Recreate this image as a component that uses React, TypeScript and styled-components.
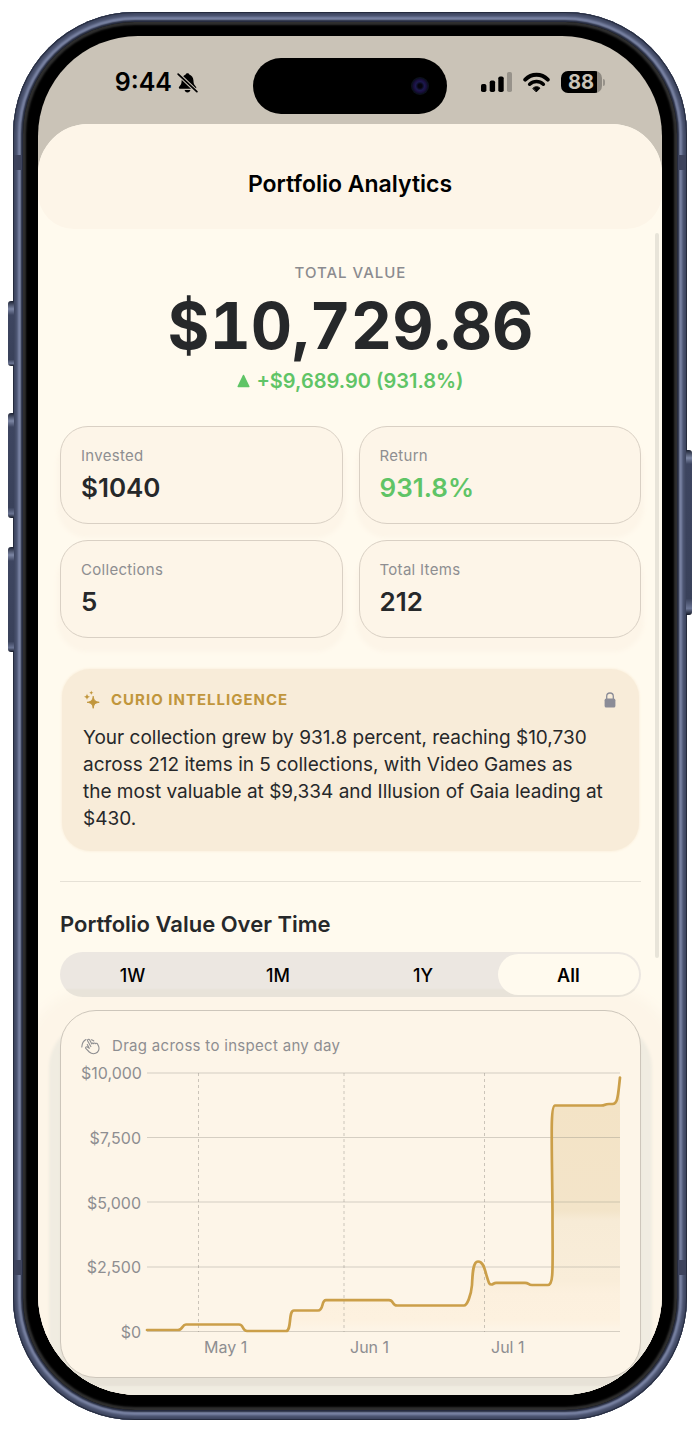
import React, { useState } from "react";
import styled, { createGlobalStyle, css } from "styled-components";

const Global = createGlobalStyle`
  *, *::before, *::after { box-sizing: border-box; }
  body {
    margin: 0;
    background: #ffffff;
    color: #26282a;
    font-family: Inter, "Liberation Sans", sans-serif;
  }
  h1, h2, p, dl, dd, dt, figure { margin: 0; }
`;

/* ---------- device ---------- */

const Page = styled.div`
  padding: 12px 13px;
`;

const Frame = styled.div`
  position: relative;
  padding: 10px;
  border-radius: 122px;
  background: #4a5371;
  box-shadow:
    inset 0 0 1px 1px #23293a,
    inset 0 0 3px 5px #434b66,
    inset 0 0 2px 8px #8690b2,
    inset 0 0 1px 10px #1d2233;
`;

const Bezel = styled.div`
  padding: 14px 15px 15px;
  border-radius: 112px;
  background: #000000;
  box-shadow: inset 0 0 2px 3px #2f2f2f;
`;

const Screen = styled.div`
  position: relative;
  overflow: hidden;
  border-radius: 100px;
  background: #cac3b7;
`;

const SideKey = styled.span<{ $side: "left" | "right"; $top: number; $height: number }>`
  position: absolute;
  ${(p) => p.$side}: -5px;
  top: ${(p) => p.$top}px;
  width: 6px;
  height: ${(p) => p.$height}px;
  border-radius: ${(p) => (p.$side === "left" ? "3px 0 0 3px" : "0 3px 3px 0")};
  background: linear-gradient(to bottom, #1c2233, #7c86a4 8px, #3d4560 14px, #39415a 90%, #6b7594 96%, #151a28);
`;

const Antenna = styled.span<{ $side: "left" | "right"; $end: "top" | "bottom" }>`
  position: absolute;
  ${(p) => p.$side}: 1px;
  ${(p) => p.$end}: ${(p) => (p.$end === "top" ? 143 : 145)}px;
  width: 8px;
  height: 15px;
  background: #3d435c;
`;

/* ---------- status bar ---------- */

const StatusBar = styled.header`
  display: grid;
  grid-template-columns: 1fr 194px 1fr;
  align-items: start;
  height: 88px;
  padding-top: 22px;
  color: #000000;
`;

const Clock = styled.div`
  display: flex;
  align-items: center;
  justify-content: flex-end;
  gap: 5px;
  height: 48px;
  padding-right: 55px;
  font-size: 25px;
  font-weight: 600;
`;

const Island = styled.div`
  display: flex;
  align-items: center;
  justify-content: flex-end;
  height: 56px;
  padding-right: 18px;
  border-radius: 28px;
  background: #000000;
`;

const Lens = styled.span`
  width: 18px;
  height: 18px;
  border-radius: 50%;
  background: radial-gradient(circle, #05040c 15%, #1b1a4e 35%, #1a0d3c 50%, #0a0f20 62%, #0d1219 70%);
`;

const Indicators = styled.div`
  display: flex;
  align-items: center;
  gap: 11px;
  height: 48px;
  padding-left: 34px;
`;

const Battery = styled.div`
  display: flex;
  align-items: center;
  gap: 1px;
`;

const BatteryCell = styled.div`
  width: 41px;
  height: 22px;
  border-radius: 7px;
  background: linear-gradient(to right, #000000 36px, #8f8a82 36px);
  color: #cac3b7;
  padding-right: 1px;
  font-size: 20px;
  font-weight: 700;
  line-height: 22px;
  text-align: center;
`;

const BatteryTip = styled.span`
  width: 2px;
  height: 7px;
  border-radius: 0 2px 2px 0;
  background: #97928a;
`;

/* ---------- sheet ---------- */

const Sheet = styled.main`
  border-radius: 50px 50px 0 0;
  background: #fffaee;
`;

const SheetHeader = styled.div`
  display: flex;
  align-items: center;
  justify-content: center;
  height: 105px;
  padding-top: 15px;
  border-radius: 50px 50px 36px 36px;
  background: #fdf5e8;
`;

const SheetTitle = styled.h1`
  color: #000000;
  font-size: 23px;
  font-weight: 600;
  line-height: 30px;
`;

const Content = styled.div`
  padding: 34px 21px 17px 22px;
`;

const ScrollThumb = styled.span`
  position: absolute;
  top: 197px;
  right: 3px;
  width: 4px;
  height: 725px;
  border-radius: 2px;
  background: #e8e4d9;
`;

/* ---------- total ---------- */

const Total = styled.section`
  display: flex;
  flex-direction: column;
  align-items: center;
`;

const Eyebrow = styled.h2`
  color: #8b8b8f;
  font-size: 15px;
  font-weight: 500;
  line-height: 20px;
  letter-spacing: 1px;
`;

const Amount = styled.p`
  margin-top: 7px;
  font-size: 64px;
  font-weight: 700;
  font-variant-numeric: tabular-nums;
  line-height: 72px;
`;

const Change = styled.p`
  display: flex;
  align-items: center;
  gap: 6px;
  margin-top: 7px;
  color: #5fc466;
  font-size: 20px;
  font-weight: 600;
  line-height: 24px;
`;

/* ---------- stats ---------- */

const Stats = styled.dl`
  display: grid;
  grid-template-columns: 1fr 1fr;
  gap: 16px;
  margin-top: 33px;
`;

const outlined = css`
  border: 1px solid #d9d0c4;
  background: #fdf5e8;
`;

const Stat = styled.div`
  ${outlined}
  height: 98px;
  padding: 19px 20px;
  border-radius: 28px;
  box-shadow: 0 11px 4px 3px #fdf5e8;
`;

const StatLabel = styled.dt`
  color: #8e8e91;
  font-size: 15px;
  line-height: 20px;
  letter-spacing: 0.02em;
`;

const StatValue = styled.dd<{ $positive?: boolean }>`
  margin-top: 6px;
  color: ${(p) => (p.$positive ? "#5fc466" : "#26282a")};
  font-size: 26px;
  font-weight: 600;
  line-height: 32px;
`;

/* ---------- insight ---------- */

const Insight = styled.section`
  margin: 31px 2px 0;
  padding: 20px 23px 19px 21px;
  border-radius: 28px;
  background: #f8ecd9;
  box-shadow: 0 0 2px 1px #fcf2e1;
`;

const InsightHead = styled.div`
  display: flex;
  align-items: center;
  height: 22px;
`;

const InsightTitle = styled.h2`
  flex: 1;
  margin-left: 10px;
  color: #c1963c;
  font-size: 15px;
  font-weight: 700;
  line-height: 22px;
  letter-spacing: 1px;
`;

const InsightText = styled.p`
  margin-top: 13px;
  font-size: 19px;
  line-height: 27px;
`;

const Divider = styled.hr`
  height: 1px;
  margin: 30px 0 0;
  border: 0;
  background: #e6e1d6;
`;

/* ---------- history ---------- */

const SectionTitle = styled.h2`
  margin-top: 27px;
  font-size: 22px;
  font-weight: 600;
  line-height: 30px;
`;

const Segments = styled.div`
  position: relative;
  z-index: 1;
  display: grid;
  grid-template-columns: repeat(4, 1fr);
  height: 45px;
  margin-top: 13px;
  padding: 2px 0;
  border-radius: 23px;
  background: linear-gradient(to bottom, #ece7e1 36px, #e8e3d9 38px);
`;

const Segment = styled.button<{ $active: boolean }>`
  margin: 0 2px;
  padding: 1px 0 0;
  border: 0;
  border-radius: 21px;
  background: ${(p) => (p.$active ? "#fffaee" : "transparent")};
  color: #000000;
  font-family: inherit;
  font-size: 18px;
  font-weight: ${(p) => (p.$active ? 600 : 500)};
  cursor: pointer;
`;

const ChartCard = styled.figure`
  ${outlined}
  height: 368px;
  margin-top: 13px;
  padding: 24px 20px 20px;
  border-color: #cdc6bb;
  border-radius: 36px;
  box-shadow:
    0 8px 2px 0 #e7e2d7,
    0 22px 3px 11px #f0ece1,
    0 14px 12px 36px #fdf5e8;
`;

const Hint = styled.figcaption`
  display: flex;
  align-items: center;
  gap: 12px;
  color: #8e8e91;
  font-size: 15px;
  line-height: 22px;
  letter-spacing: 0.02em;
`;

const Plot = styled.div`
  display: grid;
  grid-template-columns: 60px 1fr;
  column-gap: 6px;
  margin-top: 6px;
`;

const axisText = css`
  color: #8e8e91;
  font-size: 16px;
  line-height: 20px;
`;

const YAxis = styled.div`
  ${axisText}
  display: flex;
  flex-direction: column;
  justify-content: space-between;
  height: 279px;
  text-align: right;
`;

const XAxis = styled.div`
  ${axisText}
  grid-column: 2;
  display: grid;
  grid-template-columns: 57fr 146fr 141fr 129fr;
  margin-top: -5px;
`;

const XTick = styled.span<{ $first?: boolean }>`
  ${(p) => p.$first && "grid-column-start: 2;"}
`;

const Graph = styled.svg`
  display: block;
  width: 100%;
  height: 259px;
  margin-top: 10px;
  overflow: visible;
`;

/* ---------- icons ---------- */

const BellOff = () => (
  <svg width="21" height="23" viewBox="0 0 22 24" aria-hidden="true">
    <path
      d="M11 2.200c.9 0 1.600.5 1.900 1.300 2.600.9 4.200 3.200 4.300 6.200.1 3.300.7 4.800 2.200 6.200.6.6.8 1 .8 1.500 0 .7-.6 1.200-1.500 1.200H3.400c-.9 0-1.500-.5-1.500-1.200 0-.5.2-.9.8-1.500 1.500-1.400 2.100-2.900 2.200-6.200C5 6.700 6.500 4.400 9.100 3.500c.3-.8 1-1.300 1.900-1.300zM8 19.900h6c-.2 1.500-1.400 2.500-3 2.500s-2.800-1-3-2.500z"
      fill="#000"
    />
    <path d="M.8 2.800 21 21.800" stroke="#cac3b7" strokeWidth="4" />
    <path d="M1.200 3.200 20.800 21.600" stroke="#000" strokeWidth="1.800" strokeLinecap="round" />
  </svg>
);

const Signal = () => (
  <svg width="31" height="20" viewBox="0 0 31 20" aria-hidden="true">
    <rect x="0" y="12" width="5.400" height="8" rx="1.800" />
    <rect x="8.700" y="8.500" width="5.400" height="11.500" rx="1.800" />
    <rect x="17.300" y="4.500" width="5.400" height="15.500" rx="1.800" />
    <rect x="26" y="0" width="5" height="20" rx="1.800" fill="#97928a" />
  </svg>
);

const Wifi = () => (
  <svg width="27" height="21" viewBox="0 0 28 21" fill="none" stroke="#000" strokeLinecap="round" aria-hidden="true">
    <path d="M2.300 7.600C9 .8 19 .8 25.700 7.600" strokeWidth="4" />
    <path d="M6.900 12.300c4.200-3.900 10-3.900 14.200 0" strokeWidth="3.600" />
    <path d="M10.400 16.400c2-2.100 5.200-2.100 7.200 0L14 20z" fill="#000" strokeWidth="1" strokeLinejoin="round" />
  </svg>
);

const Sparkles = () => (
  <svg width="18" height="20" viewBox="0 0 18 20" fill="#c1963c" aria-hidden="true">
    <path d="M10.200 6.300c.5 3.900 1.900 5.400 6 6-4.100.6-5.500 2.100-6 6-.5-3.900-1.900-5.400-6-6 4.100-.6 5.500-2.100 6-6z" stroke="#c1963c" strokeLinejoin="round" />
    <path d="M4 3.500c.4 2.200 1.100 3 3.200 3.300C5.100 7.200 4.400 8 4 10.100 3.600 8 2.900 7.200.8 6.800 2.900 6.500 3.600 5.700 4 3.500z" />
    <path d="M8.300.5c.3 1.500.7 2 2.200 2.300-1.500.3-1.900.7-2.200 2.200-.3-1.500-.7-1.900-2.200-2.200C7.600 2.500 8 2 8.300.5z" />
  </svg>
);

const Lock = () => (
  <svg width="12" height="16" viewBox="0 0 12 16" role="img" aria-label="Private">
    <path d="M2.700 7V4.300a3.300 3.300 0 0 1 6.600 0V7" fill="none" stroke="#8b8c97" strokeWidth="1.300" />
    <rect x="0.600" y="6.600" width="10.800" height="8.900" rx="1.600" fill="#8b8c97" />
  </svg>
);

const DragHand = () => (
  <svg width="19" height="18" viewBox="0 0 19 18" fill="none" stroke="#8e8e91" strokeWidth="1.100" strokeLinecap="round" strokeLinejoin="round" aria-hidden="true">
    <path d="M.8 10C1 6.400 2.700 3.700 5 2.500M10.400 2.700c1 .3 1.700.7 2.400 1.300" />
    <path d="M9.800 9.600 6.700 4C6 2.600 7.900 1.600 8.700 3l2.100 3.900c.2-.9 1.400-1.100 1.900-.2.3-.8 1.500-.9 2 0 .4-.7 1.400-.6 1.800.2l1 2.200c1.300 3-.2 6.200-2.900 7.200-2.300.8-4.600.2-6.300-1.300l-3.300-3.300c-1-1 .3-2.400 1.400-1.700l1.900 1.300-2-3.700" />
  </svg>
);

/* ---------- data ---------- */

const stats = [
  { label: "Invested", value: "$1040" },
  { label: "Return", value: "931.8%", positive: true },
  { label: "Collections", value: "5" },
  { label: "Total Items", value: "212" },
];

const ranges = ["1W", "1M", "1Y", "All"];
const yTicks = ["$10,000", "$7,500", "$5,000", "$2,500", "$0"];
const xTicks = ["May 1", "Jun 1", "Jul 1"];

const gridRows = [0, 64.5, 129, 194, 258.5];
const gridCols = [51.5, 197, 337.5];

const line =
  "M0 257H31C36 257 35 251.500 39 251.500H92C97 251.500 95 258 100 258H139C145 258 141 237.500 147 237.500H171C177 237.500 174 227.200 179 227.200H242C247 227.200 245 232.500 250 232.500H317C320 232.500 324 223 325 212C325.500 200 326 188.500 331 188.500C337 188.500 338 198 340 204C342 210 342 211.500 344.500 211.500C346 211.500 347 209.800 349 209.800H378C382 209.800 381 212 385 212H401C407 212 405.500 195 405.500 140C405 70 403 32.500 408 32.500H454C459 32.500 457 31 462 31H465C471 31.500 471 22 473 4.500";

export default function App() {
  const [range, setRange] = useState("All");

  return (
    <Page>
      <Global />
      <Frame>
        <SideKey $side="left" $top={289} $height={65} />
        <SideKey $side="left" $top={401} $height={105} />
        <SideKey $side="left" $top={535} $height={105} />
        <SideKey $side="right" $top={438} $height={165} />
        <Antenna $side="left" $end="top" />
        <Antenna $side="right" $end="top" />
        <Antenna $side="left" $end="bottom" />
        <Antenna $side="right" $end="bottom" />
        <Bezel>
          <Screen>
            <StatusBar>
              <Clock>
                9:44
                <BellOff />
              </Clock>
              <Island>
                <Lens />
              </Island>
              <Indicators>
                <Signal />
                <Wifi />
                <Battery>
                  <BatteryCell>88</BatteryCell>
                  <BatteryTip />
                </Battery>
              </Indicators>
            </StatusBar>

            <Sheet>
              <SheetHeader>
                <SheetTitle>Portfolio Analytics</SheetTitle>
              </SheetHeader>

              <Content>
                <Total>
                  <Eyebrow>TOTAL VALUE</Eyebrow>
                  <Amount>$10,729.86</Amount>
                  <Change>
                    <svg width="13" height="14" viewBox="0 0 13 14" aria-hidden="true">
                      <path d="M6.500 1.500 11.800 12.600H1.200z" fill="#5fc466" stroke="#5fc466" strokeWidth="1.500" strokeLinejoin="round" />
                    </svg>
                    +$9,689.90 (931.8%)
                  </Change>
                </Total>

                <Stats>
                  {stats.map((s) => (
                    <Stat key={s.label}>
                      <StatLabel>{s.label}</StatLabel>
                      <StatValue $positive={s.positive}>{s.value}</StatValue>
                    </Stat>
                  ))}
                </Stats>

                <Insight>
                  <InsightHead>
                    <Sparkles />
                    <InsightTitle>CURIO INTELLIGENCE</InsightTitle>
                    <Lock />
                  </InsightHead>
                  <InsightText>
                    Your collection grew by 931.8 percent, reaching $10,730 across 212 items in 5 collections, with
                    Video Games as
                    <br />
                    the most valuable at $9,334 and Illusion of Gaia leading at $430.
                  </InsightText>
                </Insight>

                <Divider />

                <SectionTitle>Portfolio Value Over Time</SectionTitle>
                <Segments>
                  {ranges.map((r) => (
                    <Segment key={r} type="button" $active={r === range} aria-pressed={r === range} onClick={() => setRange(r)}>
                      {r}
                    </Segment>
                  ))}
                </Segments>

                <ChartCard>
                  <Hint>
                    <DragHand />
                    Drag across to inspect any day
                  </Hint>
                  <Plot>
                    <YAxis>
                      {yTicks.map((t) => (
                        <span key={t}>{t}</span>
                      ))}
                    </YAxis>
                    <Graph viewBox="0 0 473 259" preserveAspectRatio="none" role="img" aria-label="Portfolio value over time">
                      <defs>
                        <linearGradient id="area" gradientUnits="userSpaceOnUse" x1="0" y1="0" x2="0" y2="259">
                          <stop offset="0" stopColor="#f3e3c5" />
                          <stop offset="0.53" stopColor="#f3e4c9" />
                          <stop offset="0.57" stopColor="#f7ebd6" />
                          <stop offset="0.8" stopColor="#f9edd9" />
                          <stop offset="0.85" stopColor="#fcf0de" />
                          <stop offset="0.95" stopColor="#fdf1df" />
                          <stop offset="1" stopColor="#fdf5e8" />
                        </linearGradient>
                      </defs>
                      <path d={`${line}V258.500H0z`} fill="url(#area)" />
                      {gridRows.map((y) => (
                        <line key={y} x1="0" x2="473" y1={y} y2={y} stroke="#8e8a80" strokeOpacity="0.36" />
                      ))}
                      {gridCols.map((x) => (
                        <line key={x} x1={x} x2={x} y1="0" y2="259" stroke="#8e8a80" strokeOpacity="0.45" strokeDasharray="3 3" vectorEffect="non-scaling-stroke" />
                      ))}
                      <path d={line} fill="none" stroke="#cb9f49" strokeWidth="2.700" strokeLinecap="round" strokeLinejoin="round" vectorEffect="non-scaling-stroke" />
                    </Graph>
                    <XAxis>
                      {xTicks.map((t, i) => (
                        <XTick key={t} $first={i === 0}>
                          {t}
                        </XTick>
                      ))}
                    </XAxis>
                  </Plot>
                </ChartCard>
              </Content>
            </Sheet>
            <ScrollThumb />
          </Screen>
        </Bezel>
      </Frame>
    </Page>
  );
}
